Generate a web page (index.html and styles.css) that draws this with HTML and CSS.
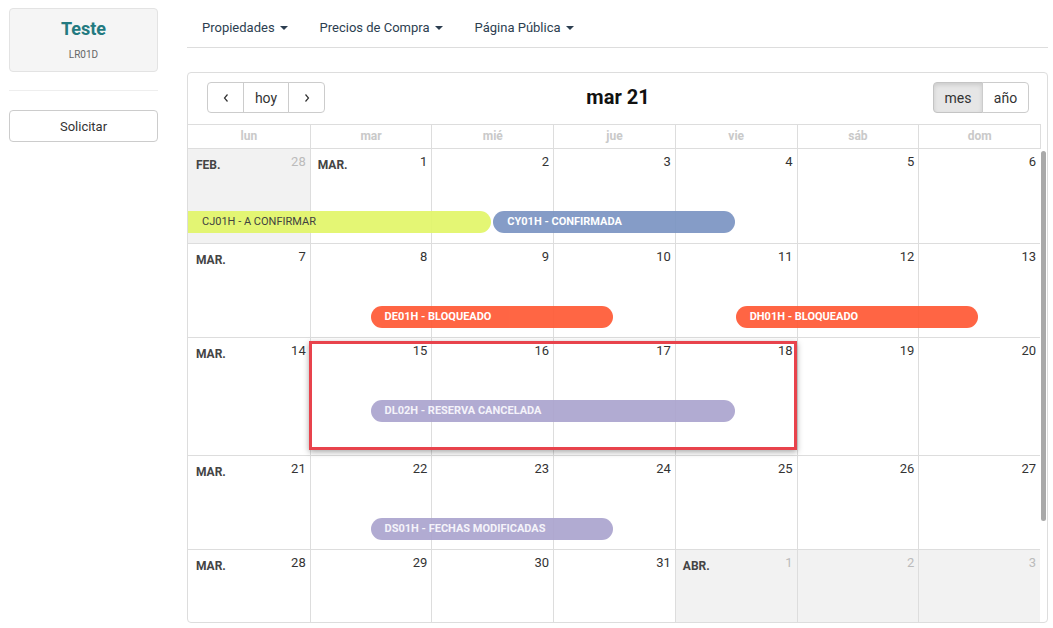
FILE: index.html
```html
<!DOCTYPE html>
<html lang="es">
<head>
<meta charset="utf-8">
<title>Calendario</title>
<link rel="stylesheet" href="styles.css">
</head>
<body>
<div class="page">
  <aside class="side">
    <div class="unit-card">
      <div class="unit-name">Teste</div>
      <div class="unit-code">LR01D</div>
    </div>
    <hr class="side-rule">
    <button class="btn-block">Solicitar</button>
  </aside>
  <main class="main">
    <nav class="topnav">
      <span class="nav-item">Propiedades <i class="caret"></i></span>
      <span class="nav-item">Precios de Compra <i class="caret"></i></span>
      <span class="nav-item">Página Pública <i class="caret"></i></span>
    </nav>
    <section class="cal">
      <div class="toolbar">
        <div class="btn-group">
          <button class="tb-btn arrow"><svg width="8" height="10" viewBox="0 0 8 10"><path d="M5.5 1.5 L2.5 5 L5.5 8.5" fill="none" stroke="#333" stroke-width="1.2"/></svg></button>
          <button class="tb-btn w-hoy">hoy</button>
          <button class="tb-btn arrow"><svg width="8" height="10" viewBox="0 0 8 10"><path d="M2.5 1.5 L5.5 5 L2.5 8.5" fill="none" stroke="#333" stroke-width="1.2"/></svg></button>
        </div>
        <h2 class="cal-title">mar 21</h2>
        <div class="btn-group right">
          <button class="tb-btn w-mes active">mes</button>
          <button class="tb-btn w-ano">año</button>
        </div>
      </div>
      <div class="cal-head">
        <div class="dow">lun</div><div class="dow">mar</div><div class="dow">mié</div><div class="dow">jue</div><div class="dow">vie</div><div class="dow">sáb</div><div class="dow">dom</div>
      </div>
      <div class="cal-body">
        <div class="weeks">
          <div class="week h95">
            <div class="day other"><span class="mon">FEB.</span><span class="num">28</span></div>
            <div class="day"><span class="mon">MAR.</span><span class="num">1</span></div>
            <div class="day"><span class="num">2</span></div>
            <div class="day"><span class="num">3</span></div>
            <div class="day"><span class="num">4</span></div>
            <div class="day"><span class="num">5</span></div>
            <div class="day"><span class="num">6</span></div>
            <div class="ev ev-yellow cont" style="grid-column: 1 / 6">CJ01H - A CONFIRMAR</div>
            <div class="ev ev-blue" style="grid-column: 6 / 10">CY01H - CONFIRMADA</div>
          </div>
          <div class="week h94">
            <div class="day"><span class="mon">MAR.</span><span class="num">7</span></div>
            <div class="day"><span class="num">8</span></div>
            <div class="day"><span class="num">9</span></div>
            <div class="day"><span class="num">10</span></div>
            <div class="day"><span class="num">11</span></div>
            <div class="day"><span class="num">12</span></div>
            <div class="day"><span class="num">13</span></div>
            <div class="ev ev-orange" style="grid-column: 4 / 8">DE01H - BLOQUEADO</div>
            <div class="ev ev-orange" style="grid-column: 10 / 14">DH01H - BLOQUEADO</div>
          </div>
          <div class="week h118">
            <div class="day"><span class="mon">MAR.</span><span class="num">14</span></div>
            <div class="day"><span class="num">15</span></div>
            <div class="day"><span class="num">16</span></div>
            <div class="day"><span class="num">17</span></div>
            <div class="day"><span class="num">18</span></div>
            <div class="day"><span class="num">19</span></div>
            <div class="day"><span class="num">20</span></div>
            <div class="ev ev-purple" style="grid-column: 4 / 10">DL02H - RESERVA CANCELADA</div>
            <div class="highlight"></div>
          </div>
          <div class="week h94">
            <div class="day"><span class="mon">MAR.</span><span class="num">21</span></div>
            <div class="day"><span class="num">22</span></div>
            <div class="day"><span class="num">23</span></div>
            <div class="day"><span class="num">24</span></div>
            <div class="day"><span class="num">25</span></div>
            <div class="day"><span class="num">26</span></div>
            <div class="day"><span class="num">27</span></div>
            <div class="ev ev-purple" style="grid-column: 4 / 8">DS01H - FECHAS MODIFICADAS</div>
          </div>
          <div class="week h95">
            <div class="day"><span class="mon">MAR.</span><span class="num">28</span></div>
            <div class="day"><span class="num">29</span></div>
            <div class="day"><span class="num">30</span></div>
            <div class="day"><span class="num">31</span></div>
            <div class="day other"><span class="mon">ABR.</span><span class="num">1</span></div>
            <div class="day other"><span class="num">2</span></div>
            <div class="day other"><span class="num">3</span></div>
          </div>
        </div>
        <div class="scrollbar"><div class="thumb"></div></div>
      </div>
    </section>
  </main>
</div>
</body>
</html>
```

FILE: styles.css
```css
* { box-sizing: border-box; }
html, body { margin: 0; padding: 0; background: #fff; }
body {
  font-family: Roboto, "Liberation Sans", Arial, sans-serif;
  color: #333;
  font-size: 13px;
  overflow: hidden;
}
.page {
  display: flex;
  gap: 29px;
  padding: 8px 5px 0 9px;
}
.side {
  width: 149px;
  flex: none;
  display: flex;
  flex-direction: column;
}
.unit-card {
  height: 64px;
  background: #f5f5f5;
  border: 1px solid #e3e3e3;
  border-radius: 4px;
  text-align: center;
  padding-top: 9px;
}
.unit-name {
  font-size: 18px;
  font-weight: 700;
  color: #237a80;
  line-height: 22px;
}
.unit-code {
  font-size: 10px;
  color: #666;
  margin-top: 9px;
  line-height: 12px;
}
.side-rule {
  border: 0;
  border-top: 1px solid #eee;
  margin: 18px 0 19px;
  height: 0;
}
.btn-block {
  height: 32px;
  background: #fff;
  border: 1px solid #ccc;
  border-radius: 4px;
  font-family: inherit;
  font-size: 13px;
  color: #333;
  padding: 0;
}
.main {
  width: 861px;
  flex: none;
  display: flex;
  flex-direction: column;
}
.topnav {
  height: 40px;
  border-bottom: 1px solid #ddd;
  display: flex;
  align-items: center;
  padding-left: 15px;
  margin-bottom: 24px;
}
.nav-item {
  color: #2c3e50;
  font-size: 13px;
  margin-right: 32px;
  display: inline-flex;
  align-items: center;
}
.caret {
  display: inline-block;
  width: 0;
  height: 0;
  border-left: 4px solid transparent;
  border-right: 4px solid transparent;
  border-top: 4px solid #2c3e50;
  margin-left: 5px;
}
.cal {
  border: 1px solid #ddd;
  border-radius: 4px;
  height: 551px;
  overflow: hidden;
  display: flex;
  flex-direction: column;
}
.toolbar {
  display: grid;
  grid-template-columns: 1fr auto 1fr;
  align-items: start;
  padding: 9px 18px 0 19px;
  height: 51px;
}
.btn-group { display: flex; }
.btn-group.right { justify-content: flex-end; }
.tb-btn {
  height: 31px;
  background: #fff;
  border: 1px solid #ccc;
  font-family: inherit;
  font-size: 14px;
  color: #333;
  padding: 0;
  margin-left: -1px;
}
.tb-btn:first-child { border-radius: 4px 0 0 4px; margin-left: 0; }
.tb-btn:last-child { border-radius: 0 4px 4px 0; }
.tb-btn.arrow { width: 37px; display: flex; align-items: center; justify-content: center; }
.w-hoy { width: 46px; }
.w-mes { width: 50px; }
.w-ano { width: 47px; }
.tb-btn.active {
  background: #e6e6e6;
  box-shadow: inset 0 2px 4px rgba(0,0,0,.12);
  border-color: #c4c4c4;
}
.cal-title {
  margin: 0;
  font-size: 20px;
  font-weight: 700;
  color: #111;
  line-height: 31px;
}
.cal-head {
  display: grid;
  grid-template-columns: repeat(7, 1fr);
  margin-right: 6px;
  border-top: 1px solid #ddd;
  border-bottom: 1px solid #ddd;
  border-right: 1px solid #ddd;
  height: 25px;
}
.dow {
  border-left: 1px solid #ddd;
  text-align: center;
  font-size: 12px;
  font-weight: 700;
  color: #c9c9c9;
  line-height: 23px;
}
.dow:first-child { border-left: 0; }
.cal-body {
  flex: 1;
  display: flex;
  overflow: hidden;
}
.weeks {
  flex: 1;
  overflow: hidden;
}
.scrollbar {
  width: 7px;
  flex: none;
  padding: 2px 1px 0 1px;
}
.thumb {
  height: 370px;
  background: #a9a9a9;
  border-radius: 3px;
}
.week {
  display: grid;
  grid-template-columns: repeat(14, 1fr);
  grid-template-rows: 62px 22px 1fr;
  border-bottom: 1px solid #ddd;
  position: relative;
}
.h95 { height: 95px; }
.h94 { height: 94px; }
.h118 { height: 118px; }
.day {
  grid-row: 1 / -1;
  border-left: 1px solid #ddd;
  display: flex;
  justify-content: space-between;
  align-items: flex-start;
  padding: 5px 4px 0 7px;
}
.week .day:nth-child(1) { grid-column: 1 / 3; border-left: 0; padding-left: 8px; }
.week .day:nth-child(2) { grid-column: 3 / 5; }
.week .day:nth-child(3) { grid-column: 5 / 7; }
.week .day:nth-child(4) { grid-column: 7 / 9; }
.week .day:nth-child(5) { grid-column: 9 / 11; }
.week .day:nth-child(6) { grid-column: 11 / 13; }
.week .day:nth-child(7) { grid-column: 13 / 15; }
.day.other { background: #f2f2f2; }
.mon {
  font-size: 12px;
  font-weight: 700;
  color: #444;
  margin-top: 4px;
}
.num {
  font-size: 13px;
  color: #333;
  margin-left: auto;
}
.day.other .num { color: #bbb; }
.ev {
  grid-row: 2;
  height: 22px;
  line-height: 22px;
  border-radius: 11px;
  font-size: 11px;
  font-weight: 700;
  color: #fff;
  padding-left: 14px;
  white-space: nowrap;
  overflow: hidden;
  margin-right: 1px;
  opacity: .93;
  z-index: 1;
}
.ev.cont { border-radius: 0 11px 11px 0; }
.ev-yellow { background: #e2f66a; color: #333; font-weight: 400; }
.ev-blue { background: #7c95c3; margin-left: 1px; }
.ev-orange { background: #ff5a36; }
.ev-purple { background: #aca5cf; color: #f4f3fa; }
.highlight {
  position: absolute;
  left: 121px;
  top: 3px;
  width: 488px;
  height: 109px;
  border: 3px solid #e8434c;
  box-shadow: 0 2px 6px rgba(0,0,0,.35);
  z-index: 2;
  pointer-events: none;
}
```
